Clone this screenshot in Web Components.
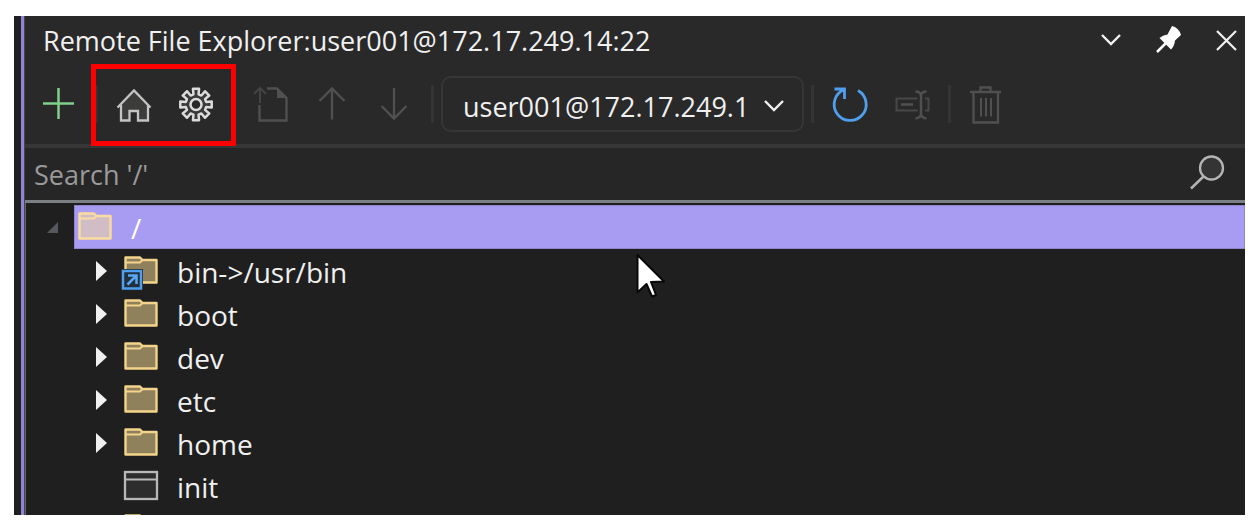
<!DOCTYPE html>
<html lang="en">
<head>
<meta charset="utf-8">
<title>Remote File Explorer</title>
<style>
  body {
    margin: 0;
    background: #fff;
    font-family: 'Open Sans', 'Noto Sans', sans-serif;
    font-size: 27px;
    color: #f0f0f0;
  }
</style>
</head>
<body>
<explorer-window>
  <title-bar slot="title">Remote File Explorer:user001@172.17.249.14:22</title-bar>
  <tool-bar slot="toolbar">
    <tool-button icon="plus" label="Add connection"></tool-button>
    <tool-separator></tool-separator>
    <marked-group>
      <tool-button icon="home" label="Home"></tool-button>
      <tool-button icon="gear" label="Settings"></tool-button>
    </marked-group>
    <tool-separator></tool-separator>
    <tool-button icon="upload" label="Upload file" disabled></tool-button>
    <tool-button icon="up" label="Up" disabled></tool-button>
    <tool-button icon="down" label="Down" disabled></tool-button>
    <tool-separator></tool-separator>
    <connection-select value="user001@172.17.249.1"></connection-select>
    <tool-separator></tool-separator>
    <tool-button icon="refresh" label="Refresh"></tool-button>
    <tool-button icon="rename" label="Rename" disabled></tool-button>
    <tool-separator></tool-separator>
    <tool-button icon="trash" label="Delete" disabled></tool-button>
  </tool-bar>
  <search-box slot="search" placeholder="Search '/'"></search-box>
  <file-node kind="folder" label="/" open selected>
    <file-node kind="link" label="bin-&gt;/usr/bin"></file-node>
    <file-node kind="folder" label="boot"></file-node>
    <file-node kind="folder" label="dev"></file-node>
    <file-node kind="folder" label="etc"></file-node>
    <file-node kind="folder" label="home"></file-node>
    <file-node kind="file" label="init"></file-node>
    <file-node kind="folder" label=""></file-node>
  </file-node>
</explorer-window>

<script>
function gearPath(cx, cy, outer, root) {
  const points = [];
  for (let i = 0; i < 8; i++) {
    [[-14, root], [-11, outer], [11, outer], [14, root]].forEach(([deg, r]) => {
      const a = (i * 45 + deg) * Math.PI / 180;
      points.push(`${(cx + r * Math.cos(a)).toFixed(2)} ${(cy + r * Math.sin(a)).toFixed(2)}`);
    });
  }
  return `M${points.join('L')}Z`;
}

const folder = (fill, stroke) => `
  <path d="M1.5 2.5H16L18.5 5H32.500V27.500H1.500Z" fill="${fill}" stroke="${stroke}" stroke-width="2.400" stroke-linejoin="round"/>
  <path d="M2 7.500H16L18.500 5" fill="none" stroke="${stroke}" stroke-width="2"/>`;

const ICONS = {
  plus: '<path d="M17.500 1V32M2 16.500H33" stroke="#7fd08a" stroke-width="2.500"/>',
  home: `<path d="M5 18L18 4L31.500 18V33.500H22V24H14V33.500H5Z" fill="#3c3c3a"/>
    <path d="M1.500 20.500L18 3.500L34.500 20.500M5 18V33.500H13.500V24H22V33.500H32V18" stroke="#c4c4c4" stroke-width="2.300"/>`,
  gear: `<path d="${gearPath(18, 17.5, 16, 10.5)}" fill="#3a3a3a" stroke="#dcdcdc" stroke-width="2.500" stroke-linejoin="round"/>
    <circle cx="18" cy="17.500" r="5.500" fill="#292929" stroke="#dcdcdc" stroke-width="2.500"/>`,
  upload: `<path d="M7 16V1M1 7L7 1L13 7" stroke="#444"  stroke-width="2"/>
    <path d="M6.500 18V33.500H33.500V11L24 1.500H14" stroke="#505050" stroke-width="2.300"/>
    <path d="M24 1L34 11H24Z" fill="#505050"/>`,
  up: '<path d="M17 2V32.500M4.500 14L17 1.500L29.500 14" stroke="#505050" stroke-width="2.300"/>',
  down: '<path d="M17 1V31M4.500 19L17 31.500L29.500 19" stroke="#505050" stroke-width="2.300"/>',
  refresh: '<path d="M26 3.500A16 16 0 1 1 12.500 2.500M2.500 2H12.500V12" stroke="#4f9fee" stroke-width="2.800"/>',
  rename: `<path d="M23.500 11.500H2.500V23.500H23.500M31 11.500H34.500V23.500H31" stroke="#484848" stroke-width="2"/>
    <path d="M7 17.500H19M27 7V28M21.500 4.500Q26 4.500 27 8Q28 4.500 32.500 4.500M21.500 31.500Q26 31 27 27.500Q28 31 32.500 31.500" stroke="#505050" stroke-width="2.500"/>`,
  trash: `<path d="M1 5H32M11.500 5V0.500H21.500V5M4.500 5V35.500H29V5" stroke="#505050" stroke-width="2.300"/>
    <path d="M12 11V29.500M17 11V29.500M22 11V29.500" stroke="#505050" stroke-width="2"/>`,
  chevron: '<path d="M9 13L18 22L27 13" stroke="#f0f0f0" stroke-width="2.400"/>',
  pin: `<path d="M21 4Q24 4.500 26.500 7Q29.500 10 30 13L24 18.500Q23.500 24 20 27.500L8.500 16Q11.500 13 16.500 12.500Z" fill="#fff"/>
    <path d="M14.500 21.500L6 30" stroke="#fff" stroke-width="2.500"/>`,
  close: '<path d="M8 9L27 28M27 9L8 28" stroke="#f0f0f0" stroke-width="2.200"/>',
  search: `<circle cx="22.500" cy="12" r="11.500" fill="#343434" stroke="#b4b4b4" stroke-width="2.300"/>
    <path d="M14.500 20.500L2 32.500" stroke="#b4b4b4" stroke-width="2.500"/>`
};

const NODE_ICONS = {
  folder: folder('#8f815c', '#f3d48a'),
  selected: folder('#d0bdc6', '#fbdc9e'),
  link: `${folder('#8f815c', '#f3d48a')}
    <rect x="-3" y="14" width="22" height="21" fill="#1e2228"/>
    <rect x="-1" y="16" width="18" height="17.500" fill="#20303f" stroke="#4f9fee" stroke-width="2.500"/>
    <path d="M3.500 29.500L12 21M4 20.500H12.500V29" fill="none" stroke="#5aa8f4" stroke-width="2.500"/>`,
  file: `<rect x="1" y="2" width="32" height="27" fill="#2d2d2d" stroke="#b8b8b8" stroke-width="2.300"/>
    <path d="M1.500 9.500H33" stroke="#b8b8b8" stroke-width="2"/>`
};

const svg = (name) => `<svg width="36" height="36" viewBox="0 0 36 36" fill="none" aria-hidden="true">${ICONS[name]}</svg>`;

const BUTTON_RESET = `
  button {
    display: grid;
    place-items: center;
    padding: 0;
    border: none;
    background: none;
    color: inherit;
  }
  svg { display: block; overflow: visible; }
`;

class ExplorerWindow extends HTMLElement {
  constructor() {
    super();
    this.attachShadow({ mode: 'open' }).innerHTML = `
      <style>
        :host {
          display: block;
          box-sizing: border-box;
          height: 100vh;
          padding: 16px 7px 14px 14px;
        }
        .frame {
          position: relative;
          display: flex;
          height: 100%;
          overflow: hidden;
          background: #1f1f1f;
        }
        .edge {
          flex: none;
          width: 7px;
          border-right: 3px solid #9084d6;
        }
        .panel {
          flex: 1;
          min-width: 0;
          border-left: 1px solid #45454d;
          background: #292929;
        }
        .tree {
          padding: 2px 0 0 1px;
          border-left: 1px solid #60656a;
          background: #1f1f1f;
        }
        .pointer {
          position: absolute;
          left: 621px;
          top: 237px;
          overflow: visible;
        }
      </style>
      <div class="frame">
        <div class="edge"></div>
        <section class="panel">
          <slot name="title"></slot>
          <slot name="toolbar"></slot>
          <slot name="search"></slot>
          <div class="tree" role="tree"><slot></slot></div>
        </section>
        <svg class="pointer" width="32" height="46" viewBox="0 0 32 46" aria-hidden="true">
          <path d="M2.500 2V39.500L11.500 31L17 43.500L21 42L16 29L29 28.500Z" fill="#fff" stroke="#080808" stroke-width="2" stroke-linejoin="round"/>
        </svg>
      </div>
    `;
  }
}

class TitleBar extends HTMLElement {
  constructor() {
    super();
    this.attachShadow({ mode: 'open' }).innerHTML = `
      <style>
        ${BUTTON_RESET}
        :host {
          display: flex;
          align-items: center;
          justify-content: space-between;
          height: 48px;
          padding-left: 18px;
        }
        .title { white-space: nowrap; }
        .controls { display: flex; gap: 22px; }
        .controls svg { height: 38px; }
      </style>
      <span class="title"><slot></slot></span>
      <div class="controls">
        <button type="button" aria-label="Window options">${svg('chevron')}</button>
        <button type="button" aria-label="Pin">${svg('pin')}</button>
        <button type="button" aria-label="Close">${svg('close')}</button>
      </div>
    `;
  }
}

class ToolBar extends HTMLElement {
  constructor() {
    super();
    this.attachShadow({ mode: 'open' }).innerHTML = `
      <style>
        :host {
          display: flex;
          align-items: stretch;
          height: 80px;
          padding-left: 3px;
        }
      </style>
      <slot></slot>
    `;
  }
}

class ToolButton extends HTMLElement {
  connectedCallback() {
    this.attachShadow({ mode: 'open' }).innerHTML = `
      <style>
        ${BUTTON_RESET}
        :host { display: grid; flex: none; width: 62px; }
        button { padding-top: 2px; }
      </style>
      <button type="button" aria-label="${this.getAttribute('label')}"${this.hasAttribute('disabled') ? ' disabled' : ''}>
        ${svg(this.getAttribute('icon'))}
      </button>
    `;
  }
}

class ToolSeparator extends HTMLElement {
  constructor() {
    super();
    this.attachShadow({ mode: 'open' }).innerHTML = `
      <style>
        :host { display: grid; place-items: center; flex: none; width: 13px; }
        div { width: 3px; height: 38px; background: #343434; }
      </style>
      <div></div>
    `;
  }
}

/* two buttons with a red frame drawn over the toolbar */
class MarkedGroup extends HTMLElement {
  constructor() {
    super();
    this.attachShadow({ mode: 'open' }).innerHTML = `
      <style>
        :host { position: relative; display: flex; flex: none; }
        .mark {
          position: absolute;
          inset: 0 -9px -2px -12px;
          border: 5px solid #f00;
          pointer-events: none;
        }
      </style>
      <slot></slot>
      <div class="mark"></div>
    `;
  }
}

class ConnectionSelect extends HTMLElement {
  connectedCallback() {
    this.attachShadow({ mode: 'open' }).innerHTML = `
      <style>
        :host {
          display: grid;
          grid-template-columns: 1fr 48px;
          align-items: center;
          align-self: center;
          flex: 0 1 363px;
          margin: 0 2px;
        }
        select {
          grid-area: 1 / 1 / 2 / 3;
          width: 100%;
          height: 56px;
          padding: 4px 48px 0 20px;
          border: 2px solid #363636;
          border-radius: 10px;
          appearance: none;
          background: transparent;
          color: inherit;
          font: inherit;
        }
        svg { grid-area: 1 / 2; padding-top: 4px; pointer-events: none; }
      </style>
      <select aria-label="Connection">
        <option>${this.getAttribute('value')}</option>
      </select>
      ${svg('chevron')}
    `;
  }
}

class SearchBox extends HTMLElement {
  connectedCallback() {
    this.attachShadow({ mode: 'open' }).innerHTML = `
      <style>
        ${BUTTON_RESET}
        :host {
          display: flex;
          align-items: center;
          height: 52px;
          padding: 0 20px 0 9px;
          border-top: 4px solid #363636;
          border-bottom: 3px solid #7b8085;
          background: #262626;
        }
        input {
          flex: 1;
          min-width: 0;
          padding: 0;
          border: none;
          outline: none;
          background: none;
          color: inherit;
          font: inherit;
        }
        input::placeholder { color: #9a9a9a; opacity: 1; }
      </style>
      <input type="text" aria-label="Search" placeholder="${this.getAttribute('placeholder')}">
      <button type="button" aria-label="Run search">${svg('search')}</button>
    `;
  }
}

class FileNode extends HTMLElement {
  connectedCallback() {
    const kind = this.getAttribute('kind');
    const selected = this.hasAttribute('selected');
    const open = this.hasAttribute('open');
    const arrow = open
      ? '<path d="M11 5V16H0Z" fill="#55585c"/>'
      : '<path d="M1 0L12 10L1 20Z" fill="#f0f0f0"/>';

    this.setAttribute('role', 'treeitem');
    this.attachShadow({ mode: 'open' }).innerHTML = `
      <style>
        ${BUTTON_RESET}
        :host { display: block; }
        .row { display: flex; height: 43px; }
        :host([selected]) .row { height: 44px; }
        .twisty {
          flex: none;
          width: 47px;
          padding-right: 13px;
          justify-items: end;
        }
        :host([selected]) .twisty { padding-right: 15px; }
        .item {
          flex: 1;
          display: flex;
          align-items: center;
          gap: 19px;
          min-width: 0;
          padding-left: 4px;
        }
        :host([selected]) .item {
          box-shadow: inset 0 0 0 1px #8f85cc;
          background: #a89cf2;
          color: #fff;
        }
        .label { padding-top: 2px; font-size: 28px; white-space: nowrap; }
        .children { padding-left: 46px; }
      </style>
      <div class="row">
        <button class="twisty" type="button" aria-label="Toggle ${this.getAttribute('label')}">
          ${kind === 'file' ? '' : `<svg width="12" height="20" viewBox="0 0 12 20" aria-hidden="true">${arrow}</svg>`}
        </button>
        <div class="item">
          <svg width="34" height="32" viewBox="0 0 34 32" aria-hidden="true">${NODE_ICONS[selected ? 'selected' : kind]}</svg>
          <span class="label">${this.getAttribute('label')}</span>
        </div>
      </div>
      <div class="children" role="group"><slot></slot></div>
    `;
  }
}

customElements.define('explorer-window', ExplorerWindow);
customElements.define('title-bar', TitleBar);
customElements.define('tool-bar', ToolBar);
customElements.define('tool-button', ToolButton);
customElements.define('tool-separator', ToolSeparator);
customElements.define('marked-group', MarkedGroup);
customElements.define('connection-select', ConnectionSelect);
customElements.define('search-box', SearchBox);
customElements.define('file-node', FileNode);
</script>
</body>
</html>
